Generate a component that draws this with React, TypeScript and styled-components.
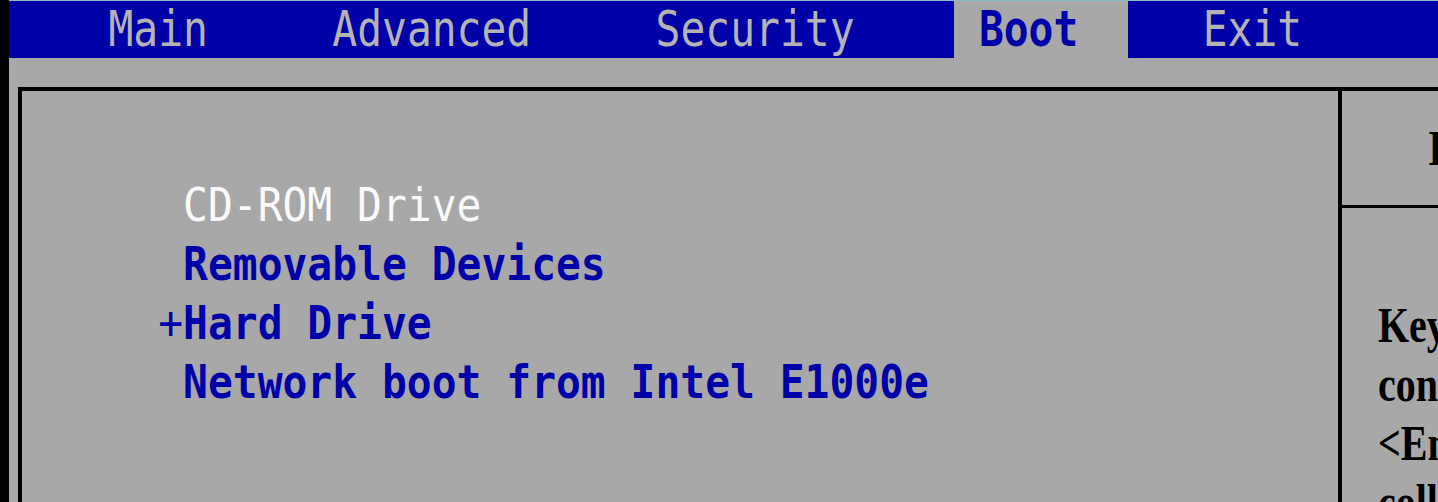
import React from "react";
import styled, { createGlobalStyle } from "styled-components";

const CELL = 24.87;
const ROW = 59;
const GREY = "#a8a8a8";
const BLUE = "#0000a8";

const GlobalStyle = createGlobalStyle`
  html, body {
    margin: 0;
    padding: 0;
    background: #000;
    overflow: hidden;
  }
`;

const Screen = styled.div`
  width: 1438px;
  height: 502px;
  box-sizing: border-box;
  padding-left: 9px;
  background: #000;
  display: flex;
  overflow: hidden;
`;

const Surface = styled.div`
  flex: 1;
  min-width: 0;
  display: flex;
  flex-direction: column;
  background: ${GREY};
  border-top: 1px solid #86bcc8;
  overflow: hidden;
`;

const MenuBar = styled.nav`
  flex-shrink: 0;
  height: 57px;
  display: flex;
  background: ${BLUE};
  padding-left: ${4 * CELL}px;
  font-family: "DejaVu Sans Mono", "Liberation Mono", monospace;
  font-size: ${CELL / 0.602}px;
`;

const Tab = styled.div<{ $cols: number; $pad: number; $active?: boolean }>`
  flex-shrink: 0;
  box-sizing: border-box;
  width: ${(p) => p.$cols * CELL}px;
  padding-left: ${(p) => p.$pad * CELL}px;
  display: flex;
  align-items: center;
  background: ${(p) => (p.$active ? GREY : "transparent")};
  color: ${(p) => (p.$active ? BLUE : "#b4b4b4")};
  font-weight: ${(p) => (p.$active ? "bold" : "normal")};
`;

const TabLabel = styled.span`
  display: inline-block;
  white-space: pre;
  transform: scaleY(1.2);
  line-height: 1;
`;

const Body = styled.div`
  flex: 1;
  min-height: 0;
  display: flex;
  padding: 29px 0 0 9px;
`;

const Box = styled.div`
  flex: 1;
  min-width: 0;
  display: flex;
  border-top: 4px solid #000;
  border-left: 4px solid #000;
`;

const LeftPane = styled.div`
  flex-shrink: 0;
  width: 1316px;
  box-sizing: border-box;
  padding: 86px 0 0 ${158.2 - 22}px;
  display: flex;
  flex-direction: column;
  font-family: "DejaVu Sans Mono", "Liberation Mono", monospace;
  font-size: ${CELL / 0.602}px;
`;

const Item = styled.div<{ $selected?: boolean }>`
  height: ${ROW}px;
  display: flex;
  align-items: center;
  color: ${(p) => (p.$selected ? "#fafafa" : BLUE)};
  font-weight: ${(p) => (p.$selected ? "normal" : "bold")};
`;

const Marker = styled.span`
  display: inline-block;
  width: ${CELL}px;
  flex-shrink: 0;
  font-weight: normal;
  transform: scaleY(1.1);
  line-height: 1;
`;

const ItemLabel = styled.span`
  display: inline-block;
  white-space: pre;
  transform: scaleY(1.1);
  line-height: 1;
`;

const RightPane = styled.aside`
  flex: 1;
  min-width: 0;
  display: flex;
  flex-direction: column;
  border-left: 4px solid #000;
  overflow: hidden;
  font-family: "Liberation Serif", "DejaVu Serif", serif;
  font-weight: bold;
  font-size: 50px;
  color: #000;
`;

const HelpTitle = styled.div`
  height: 114px;
  flex-shrink: 0;
  display: flex;
  align-items: center;
  padding-left: 86px;
  border-bottom: 3px solid #000;
  white-space: nowrap;
`;

const HelpBody = styled.div`
  padding: 87px 0 0 36px;
  display: flex;
  flex-direction: column;
`;

const HelpLine = styled.div`
  height: ${ROW}px;
  display: flex;
  align-items: center;
  white-space: nowrap;
`;

const HelpText = styled.span`
  display: inline-block;
  white-space: pre;
  transform: scaleX(0.8);
  transform-origin: left center;
  line-height: 1;
`;

const tabs = [
  { label: "Main", cols: 9, pad: 0 },
  { label: "Advanced", cols: 13, pad: 0 },
  { label: "Security", cols: 12, pad: 0 },
  { label: "Boot", cols: 7, pad: 1, active: true },
  { label: "Exit", cols: 12, pad: 3 },
];

const items = [
  { marker: "", label: "CD-ROM Drive", selected: true },
  { marker: "", label: "Removable Devices" },
  { marker: "+", label: "Hard Drive" },
  { marker: "", label: "Network boot from Intel E1000e" },
];

const helpLines = [
  "Keys used to view or",
  "configure devices:",
  "<Enter> expands or",
  "collapses devices with",
];

export default function App() {
  return (
    <>
      <GlobalStyle />
      <Screen>
        <Surface>
          <MenuBar>
            {tabs.map((t) => (
              <Tab key={t.label} $cols={t.cols} $pad={t.pad} $active={t.active}>
                <TabLabel>{t.label}</TabLabel>
              </Tab>
            ))}
          </MenuBar>
          <Body>
            <Box>
              <LeftPane>
                {items.map((it) => (
                  <Item key={it.label} $selected={it.selected}>
                    <Marker>{it.marker}</Marker>
                    <ItemLabel>{it.label}</ItemLabel>
                  </Item>
                ))}
              </LeftPane>
              <RightPane>
                <HelpTitle>
                  <HelpText>Item Specific Help</HelpText>
                </HelpTitle>
                <HelpBody>
                  {helpLines.map((l) => (
                    <HelpLine key={l}>
                      <HelpText>{l}</HelpText>
                    </HelpLine>
                  ))}
                </HelpBody>
              </RightPane>
            </Box>
          </Body>
        </Surface>
      </Screen>
    </>
  );
}
